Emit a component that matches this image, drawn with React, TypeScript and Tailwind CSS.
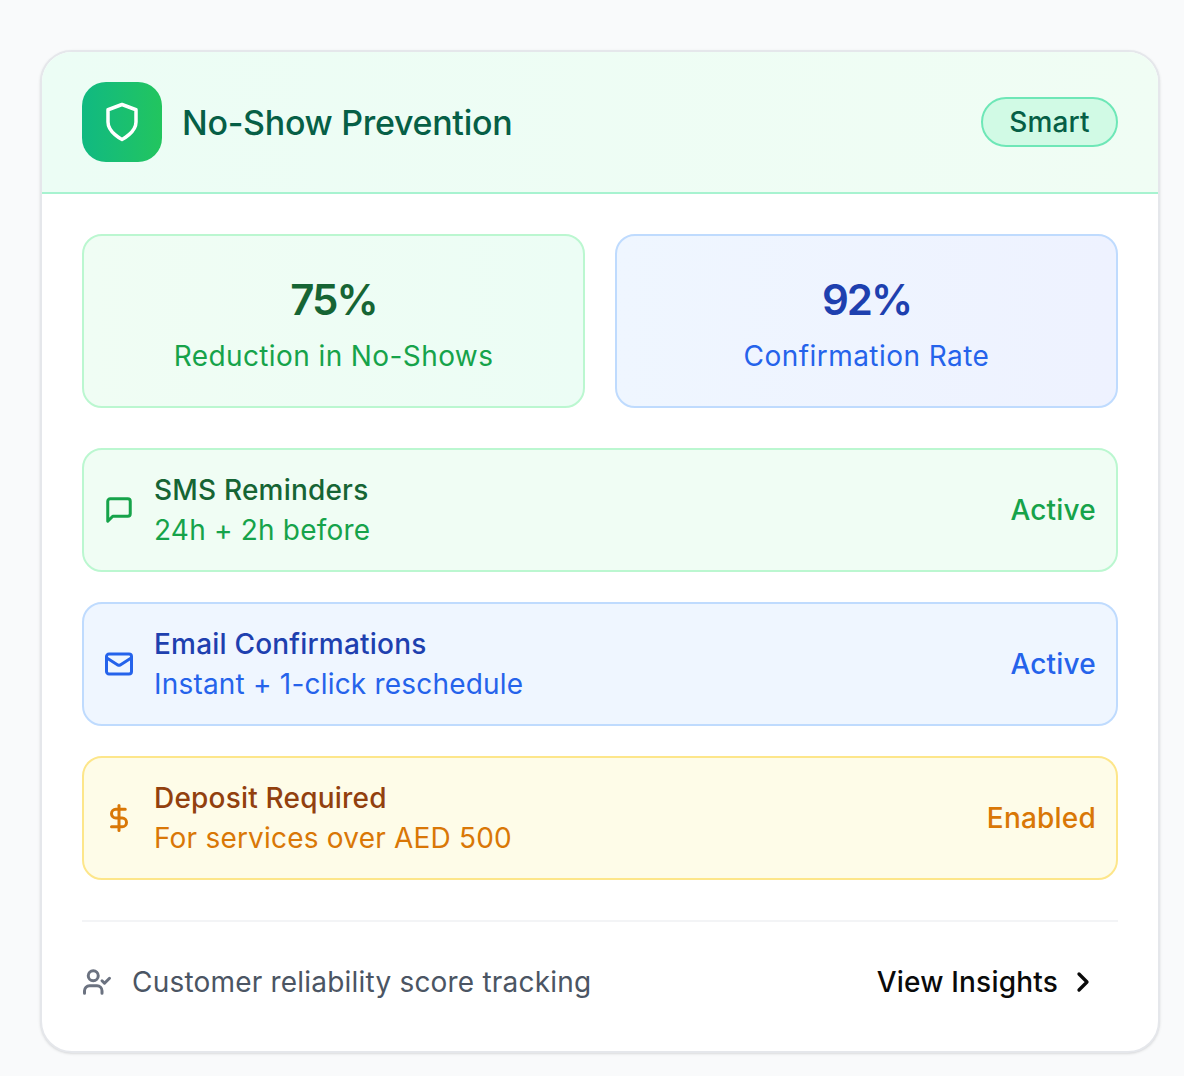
import { Mail, DollarSign, UserCheck, ChevronRight } from "lucide-react";

const MessageIcon = ({ className, strokeWidth = 2.4 }: { className?: string; strokeWidth?: number }) => (
  <svg viewBox="0 0 24 24" fill="none" stroke="currentColor" strokeWidth={strokeWidth} strokeLinecap="round" strokeLinejoin="round" className={className}>
    <path d="M21 15a2 2 0 0 1-2 2H7l-4 4V5a2 2 0 0 1 2-2h14a2 2 0 0 1 2 2z" />
  </svg>
);

const ShieldIcon = ({ className }: { className?: string }) => (
  <svg viewBox="0 0 24 24" fill="none" stroke="currentColor" strokeWidth={2} strokeLinecap="round" strokeLinejoin="round" className={className}>
    <path d="M12 22s8-4 8-10V5l-8-3-8 3v7c0 6 8 10 8 10z" />
  </svg>
);

const rows = [
  { Icon: MessageIcon, t: "SMS Reminders", s: "24h + 2h before", a: "Active", box: "bg-[#f0fdf4] border-[#bbf7d0]", ti: "text-[#166534]", c: "text-[#16a34a]" },
  { Icon: Mail, t: "Email Confirmations", s: "Instant + 1-click reschedule", a: "Active", box: "bg-[#eff6ff] border-[#bfdbfe]", ti: "text-[#1e40af]", c: "text-[#2563eb]" },
  { Icon: DollarSign, t: "Deposit Required", s: "For services over AED 500", a: "Enabled", box: "bg-[#fefce8] border-[#fde68a]", ti: "text-[#92400e]", c: "text-[#d97706]" },
];

export default function App() {
  return (
    <div className="min-h-[1076px] bg-[#f9fafb] pt-[50px] pr-[24px] pl-[40px] font-['Inter',sans-serif] text-[28px] leading-[40px] tracking-[0.2px]">
      <div className="overflow-hidden rounded-[32px] border-2 border-[#e5e7eb] bg-white shadow-sm">
        <div className="flex items-center justify-between border-b-2 border-[#a7f3d0] bg-gradient-to-r from-[#ecfdf5] to-[#f0fdf4] px-10 py-[30px]">
          <div className="flex items-center gap-5">
            <div className="flex h-20 w-20 items-center justify-center rounded-3xl bg-gradient-to-r from-[#10b981] to-[#22c55e]">
              <ShieldIcon className="h-[42px] w-[42px] text-white" />
            </div>
            <h3 className="pt-[2px] text-[34px] leading-[56px] font-medium tracking-[-0.3px] text-[#065f46]">No-Show Prevention</h3>
          </div>
          <span className="flex h-[50px] w-[137px] items-center justify-center rounded-full border-2 border-[#6ee7b7] bg-[#d1fae5] font-[450] text-[#065f46]">Smart</span>
        </div>
        <div className="flex flex-col px-10 pt-10 pb-[39px]">
          <div className="grid grid-cols-2 gap-[30px]">
            <div className="flex h-[174px] flex-col items-center justify-center rounded-[20px] border-2 border-[#bbf7d0] bg-gradient-to-r from-[#f0fdf4] to-[#ecfdf5] pt-[2px]">
              <div className="text-[42px] leading-[64px] font-semibold tracking-[-2px] text-[#166534]">75%</div>
              <div className="mt-1 tracking-[0.4px] text-[#16a34a]">Reduction in No-Shows</div>
            </div>
            <div className="flex h-[174px] flex-col items-center justify-center rounded-[20px] border-2 border-[#bfdbfe] bg-gradient-to-r from-[#eff6ff] to-[#eef2ff] pt-[2px]">
              <div className="text-[42px] leading-[64px] font-semibold tracking-[-2px] text-[#1e40af]">92%</div>
              <div className="mt-1 tracking-[0.45px] text-[#2563eb]">Confirmation Rate</div>
            </div>
          </div>
          <div className="mt-10 flex flex-col gap-[30px]">
            {rows.map(({ Icon, t, s, a, box, ti, c }) => (
              <div key={t} className={`flex items-center justify-between rounded-[20px] border-2 p-5 ${box}`}>
                <div className="flex items-center gap-5">
                  <Icon className={`h-[30px] w-[30px] ${c}`} strokeWidth={2.4} />
                  <div>
                    <div className={`font-[450] ${ti}`}>{t}</div>
                    <div className={c}>{s}</div>
                  </div>
                </div>
                <span className={`font-[450] ${c}`}>{a}</span>
              </div>
            ))}
          </div>
          <div className="mt-10 flex items-center justify-between border-t-2 border-[#f3f4f6] pt-[30px]">
            <div className="flex items-center gap-5 text-[#4b5563]">
              <UserCheck className="h-[30px] w-[30px] text-[#6b7280]" strokeWidth={2.4} />
              <span>Customer reliability score tracking</span>
            </div>
            <button className="flex h-[60px] items-center gap-[9px] pr-[19px] font-[450] text-[#0a0a0a]">
              View Insights
              <ChevronRight className="h-8 w-8" strokeWidth={2.5} />
            </button>
          </div>
        </div>
      </div>
    </div>
  );
}
